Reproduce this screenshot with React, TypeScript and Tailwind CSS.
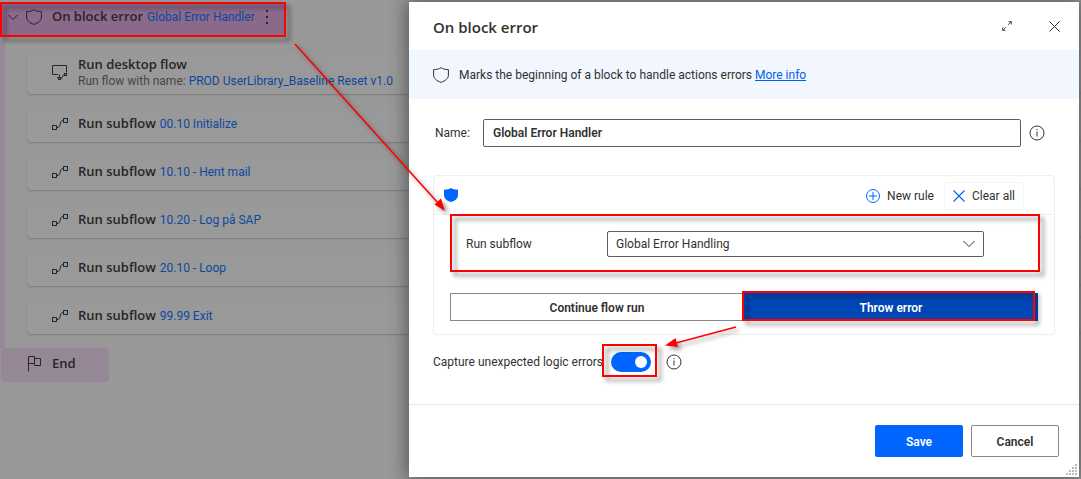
import React, { useState } from 'react';

const subflows = ['00.10 Initialize', '10.10 - Hent mail', '10.20 - Log på SAP', '20.10 - Loop', '99.99 Exit'];

function ShieldIcon({ className = '' }: { className?: string }) {
  return (
    <svg className={className} width="16" height="16" viewBox="0 0 16 16" fill="none" stroke="currentColor" aria-hidden="true">
      <path d="M8 .6C6.200 2 3.600 2.600.6 2.600V8c0 3.600 3 5.800 7.400 7.400C12.400 13.800 15.400 11.600 15.400 8V2.600C12.400 2.600 9.800 2 8 .6Z" />
    </svg>
  );
}

function SubflowIcon() {
  return (
    <svg width="17" height="14" viewBox="0 0 17 14" fill="none" stroke="currentColor" aria-hidden="true">
      <rect x=".5" y="8.500" width="4" height="4" />
      <rect x="11.500" y="1.500" width="4" height="4" />
      <path d="M5 10.500h1c2.500 0 2-7 4.500-7h1" />
    </svg>
  );
}

function DesktopFlowIcon() {
  return (
    <svg width="17" height="17" viewBox="0 0 17 17" fill="none" stroke="currentColor" aria-hidden="true">
      <path d="M6 10.500H.5v-9h14v7M7.500 10.500v3M5 13.500h2" />
      <rect x="6.500" y="13.500" width="2" height="2" />
      <rect x="12.500" y="9.500" width="2" height="2" />
      <path d="M9 14.500c2 0 1-4 3.500-4" />
    </svg>
  );
}

function FlagIcon() {
  return (
    <svg width="14" height="17" viewBox="0 0 14 17" fill="none" stroke="currentColor" aria-hidden="true">
      <path d="M.5 16.500V1.500h6v7h-6M6.500 3.500h6v7h-6v-2" />
    </svg>
  );
}

function InfoIcon() {
  return (
    <svg width="16" height="16" viewBox="0 0 16 16" fill="none" stroke="currentColor" aria-hidden="true">
      <circle cx="8" cy="8" r="7" />
      <path d="M8 6.500v5M8 4v1.200" />
    </svg>
  );
}

function Highlight({ className }: { className: string }) {
  return (
    <span
      aria-hidden="true"
      className={`pointer-events-none absolute z-10 border-2 border-[#ff0000] drop-shadow-[4px_4px_2px_rgba(0,0,0,0.45)] ${className}`}
    />
  );
}

function FlowList() {
  return (
    <section className="text-[#262626]">
      <div className="relative mt-0.5 flex h-[35px] w-[286px] items-center bg-[#8b698b] pb-[5px] pl-2">
        <svg width="10" height="7" viewBox="0 0 10 7" fill="none" stroke="currentColor" aria-hidden="true">
          <path d="M.5 1 5 5.500 9.500 1" />
        </svg>
        <ShieldIcon className="ml-2" />
        <h2 className="ml-[10px] font-['Open_Sans',sans-serif] text-[13px] font-semibold">On block error</h2>
        <a href="#handler" className="ml-1 text-[12px] whitespace-nowrap text-[#0b489f]">Global Error Handler</a>
        <button type="button" aria-label="More actions" className="ml-2.5">
          <svg width="4" height="16" viewBox="0 0 4 16" fill="currentColor" aria-hidden="true">
            <path d="M1 1h2v2H1zM1 7h2v2H1zM1 13h2v2H1z" />
          </svg>
        </button>
        <Highlight className="inset-0" />
      </div>
      <ul className="flex flex-col gap-3.5 border-l-[5px] border-[#958795] pt-[13px] pb-3.5 pl-[22px]">
        <li className="flex h-11 items-center gap-[9px] rounded-sm bg-[#999999] pl-[25px] shadow-[0_1px_2px_rgba(0,0,0,0.2)]">
          <DesktopFlowIcon />
          <div>
            <h3 className="font-['Open_Sans',sans-serif] text-[13px] leading-[18px] font-semibold">Run desktop flow</h3>
            <p className="text-[12px] leading-4 text-[#464646]">
              Run flow with name: <a href="#flow" className="text-[#0b489f]">PROD UserLibrary_Baseline Reset v1.0</a>
            </p>
          </div>
        </li>
        {subflows.map((name) => (
          <li key={name} className="flex h-[34px] items-center rounded-sm bg-[#999999] pb-[3px] pl-[25px] shadow-[0_1px_2px_rgba(0,0,0,0.2)]">
            <SubflowIcon />
            <h3 className="ml-[9px] font-['Open_Sans',sans-serif] text-[13px] font-semibold">Run subflow</h3>
            <a href="#subflow" className="ml-1 text-[12px] text-[#0b489f]">{name}</a>
          </li>
        ))}
      </ul>
      <div className="ml-px flex h-[34px] w-[108px] items-center gap-2.5 rounded-sm bg-[#958795] pb-[3px] pl-[27px]">
        <FlagIcon />
        <h2 className="font-['Open_Sans',sans-serif] text-[13px] font-semibold">End</h2>
      </div>
    </section>
  );
}

function ErrorDialog() {
  const [capture, setCapture] = useState(true);
  return (
    <div
      role="dialog"
      aria-labelledby="dialog-title"
      className="absolute top-0.5 right-0.5 left-[409px] bg-white text-[12px] text-[#323130] shadow-[0_0_16px_3px_rgba(0,0,0,0.4)]"
    >
      <header className="flex h-12 items-center pr-[19px] pl-6">
        <h1 id="dialog-title" className="mr-auto pt-0.5 font-['Open_Sans',sans-serif] text-[15px] font-semibold">On block error</h1>
        <button type="button" aria-label="Expand" className="mr-[37px]">
          <svg width="10" height="10" viewBox="0 0 10 10" fill="none" stroke="currentColor" strokeWidth=".9" aria-hidden="true">
            <path d="M6.200 3.800 9.300.7M6.500.7h2.800v2.800M3.800 6.200 .7 9.300M.7 6.500v2.800h2.800" />
          </svg>
        </button>
        <button type="button" aria-label="Close">
          <svg width="11" height="11" viewBox="0 0 11 11" fill="none" stroke="currentColor" aria-hidden="true">
            <path d="m.5.5 10 10M10.500.5l-10 10" />
          </svg>
        </button>
      </header>

      <div className="flex h-[49px] items-center gap-2.5 bg-[#f1f6ff] pl-6">
        <ShieldIcon />
        <p>
          Marks the beginning of a block to handle actions errors <a href="#info" className="text-[#0060f0] underline">More info</a>
        </p>
      </div>

      <div className="px-6 pt-5 pb-8">
        <div className="flex items-center">
          <label htmlFor="name" className="w-[50px] pl-0.5">Name:</label>
          <input
            id="name"
            defaultValue="Global Error Handler"
            className="h-7 min-w-0 flex-1 rounded-xs border border-[#605e5c] px-[9px] font-semibold"
          />
          <button type="button" aria-label="About the name" className="mr-2.5 ml-2"><InfoIcon /></button>
        </div>

        <section className="mt-7 rounded-sm border border-[#efefef]">
          <div className="flex h-[39px] items-center border-b border-[#efefef] pr-[30px] pl-2.5">
            <svg className="mr-auto" width="14" height="14" viewBox="0 0 14 14" fill="#0066ff" aria-hidden="true">
              <path d="M7 0C5.400 1.200 3 1.500 0 1.700V7c0 3.600 3 6 7 7 4-1 7-3.400 7-7V1.700C11 1.500 8.600 1.200 7 0Z" />
            </svg>
            <button type="button" className="mt-0.5 flex h-7 items-center gap-[7px] px-2.5">
              <svg width="14" height="14" viewBox="0 0 14 14" fill="none" stroke="#0066ff" aria-hidden="true">
                <circle cx="7" cy="7" r="6.500" />
                <path d="M7 3v8M3 7h8" />
              </svg>
              New rule
            </button>
            <button type="button" className="mt-0.5 flex h-7 items-center gap-[7px] border border-[#f5f5f5] px-2">
              <svg width="12" height="12" viewBox="0 0 12 12" fill="none" stroke="#0066ff" strokeWidth="1.200" aria-hidden="true">
                <path d="M.5.500 11.500 11.500M11.500.500.5 11.500" />
              </svg>
              Clear all
            </button>
          </div>

          <div className="px-4 pb-[13px]">
            <div className="relative flex items-center pt-4 pb-[15px] pl-4">
              <label htmlFor="subflow" className="w-[141px]">Run subflow</label>
              <div className="relative mr-[54px] flex-1">
                <select id="subflow" className="h-[26px] w-full appearance-none rounded-xs border border-[#605e5c] bg-white px-2">
                  <option>Global Error Handling</option>
                </select>
                <svg className="pointer-events-none absolute top-[9px] right-[9px]" width="12" height="8" viewBox="0 0 12 8" fill="none" stroke="currentColor" aria-hidden="true">
                  <path d="M.5 1 6 6.500 11.500 1" />
                </svg>
              </div>
              <Highlight className="-top-px right-[-2px] bottom-0 left-0" />
            </div>
            <div className="mt-[21px] grid grid-cols-2 font-semibold">
              <button type="button" className="h-7 border border-[#8a8886] pt-0.5">Continue flow run</button>
              <button type="button" className="relative h-7 bg-[#0046b5] pt-0.5 text-white">
                Throw error
                <Highlight className="-top-0.5 right-[3px] bottom-0 -left-0.5" />
              </button>
            </div>
          </div>
        </section>

        <div className="mt-[17px] flex h-5 items-center">
          <label htmlFor="capture" className="w-[178px] whitespace-nowrap">Capture unexpected logic errors</label>
          <span className="relative flex">
            <input
              id="capture"
              type="checkbox"
              role="switch"
              checked={capture}
              onChange={(e) => setCapture(e.target.checked)}
              className="peer h-5 w-10 appearance-none rounded-full bg-[#8a8886] checked:bg-[#0066ff]"
            />
            <span className="pointer-events-none absolute top-1 left-1 size-3 rounded-full bg-white peer-checked:left-6" />
            <Highlight className="-top-2 -right-1.5 -bottom-[5px] -left-[9px]" />
          </span>
          <button type="button" aria-label="About error capture" className="ml-[15px]"><InfoIcon /></button>
        </div>
      </div>

      <footer className="flex justify-end gap-2 border-t border-[#e6e6e6] py-5 pr-5 font-semibold">
        <button type="button" className="h-8 w-22 rounded-xs bg-[#0066ff] pt-0.5 text-white">Save</button>
        <button type="button" className="h-8 w-22 rounded-xs border border-[#8a8886] pt-0.5">Cancel</button>
      </footer>
      <svg className="absolute right-0.5 bottom-0.5" width="11" height="11" viewBox="0 0 11 11" fill="#b4bccb" aria-hidden="true">
        <path d="M9 0h2v2H9zM9 3h2v2H9zM6 3h2v2H6zM9 6h2v2H9zM6 6h2v2H6zM3 6h2v2H3zM9 9h2v2H9zM6 9h2v2H6zM3 9h2v2H3zM0 9h2v2H0z" />
      </svg>
    </div>
  );
}

function Arrows() {
  return (
    <svg
      className="pointer-events-none absolute top-0 left-0 z-20 drop-shadow-[3px_3px_2px_rgba(0,0,0,0.4)]"
      width="760"
      height="380"
      viewBox="0 0 760 380"
      fill="#ff0000"
      stroke="#ff0000"
      aria-hidden="true"
    >
      <path d="M295 44 438 203M736 327l-60 16" strokeWidth="1.600" fill="none" />
      <path d="M445 211 434.500 204.500 441 198.500ZM665 345.500 675.500 338 678 347Z" stroke="none" />
    </svg>
  );
}

export default function App() {
  return (
    <main className="relative flow-root min-h-screen overflow-hidden bg-[#989898] font-['Roboto','Open_Sans',sans-serif]">
      <FlowList />
      <ErrorDialog />
      <Arrows />
    </main>
  );
}
